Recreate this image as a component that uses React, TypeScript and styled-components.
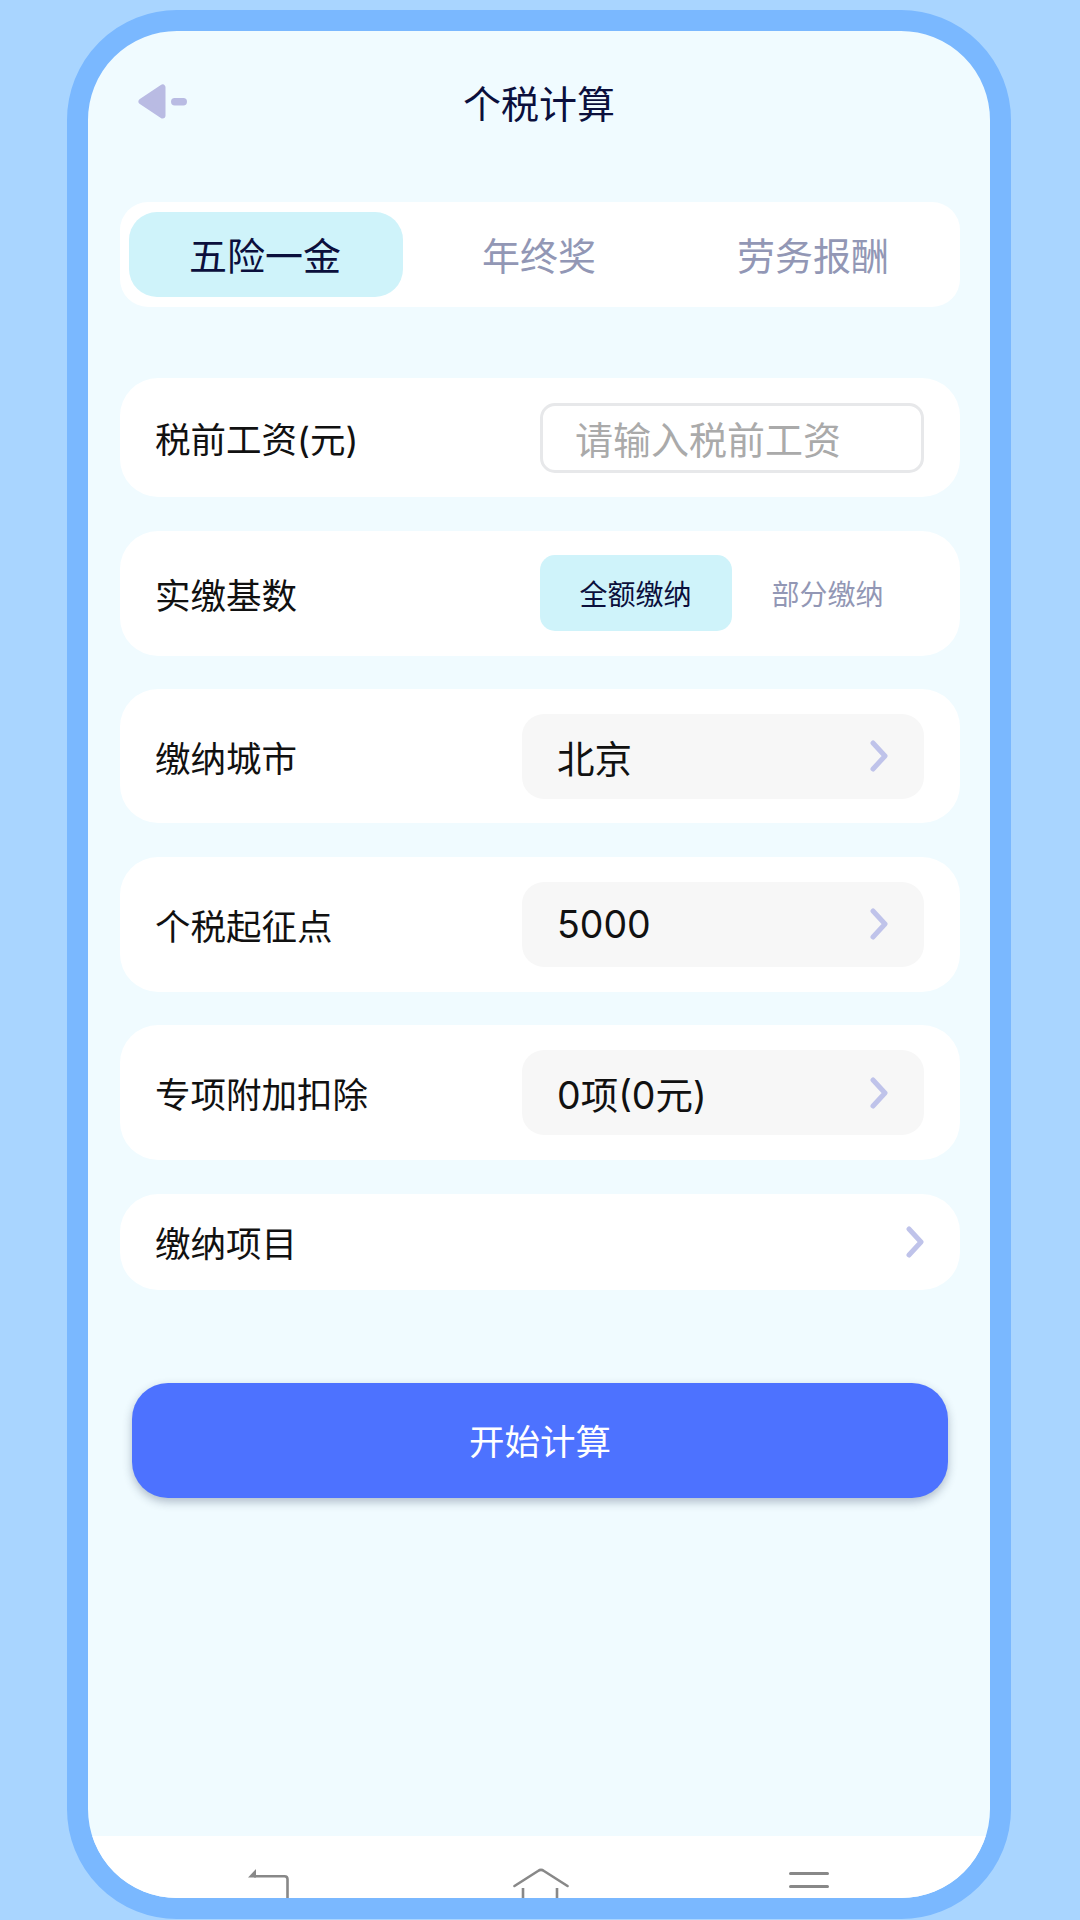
import React from "react";
import styled, { createGlobalStyle } from "styled-components";

const FONT = `Inter, "Noto Sans CJK SC", sans-serif`;

const Global = createGlobalStyle`
  html, body { margin: 0; padding: 0; }
  body { background: #a9d5ff; font-family: ${FONT}; }
`;

const Page = styled.div`
  width: 1080px;
  height: 1920px;
  box-sizing: border-box;
  padding: 10px 69px 1px 67px;
  background: #a9d5ff;
  overflow: hidden;
`;

const Phone = styled.div`
  height: 100%;
  box-sizing: border-box;
  border: 21px solid #7ab8ff;
  border-radius: 110px;
  background: #f0fbff;
  overflow: hidden;
  display: flex;
  flex-direction: column;
`;

const Header = styled.header`
  height: 146px;
  box-sizing: border-box;
  flex: none;
  display: grid;
  grid-template-columns: 1fr auto 1fr;
  align-items: center;
  padding: 0 50px 6px;
  margin-bottom: 25px;
`;

const Title = styled.h1`
  margin: 0;
  font-size: 38px;
  font-weight: 400;
  color: #0b0f3c;
`;

const Content = styled.main`
  display: flex;
  flex-direction: column;
  padding: 0 30px 0 32px;
`;

const Tabs = styled.div`
  height: 105px;
  box-sizing: border-box;
  padding: 10px 9px;
  background: #fff;
  border-radius: 28px;
  display: grid;
  grid-template-columns: repeat(3, 1fr);
  margin-bottom: 71px;
`;

const Tab = styled.div<{ $active?: boolean }>`
  display: flex;
  align-items: center;
  justify-content: center;
  padding: 0 2px 2px 0;
  border-radius: 28px;
  font-size: 38px;
  color: ${(p) => (p.$active ? "#0b0f3c" : "#9297b5")};
  background: ${(p) => (p.$active ? "#cff3fa" : "transparent")};
`;

const Rows = styled.div`
  display: flex;
  flex-direction: column;
  gap: 33.5px;
`;

const Row = styled.div<{ $h: number }>`
  height: ${(p) => p.$h}px;
  box-sizing: border-box;
  padding: 0 36px 0 35px;
  background: #fff;
  border-radius: 38px;
  display: flex;
  align-items: center;
  justify-content: space-between;
`;

const Label = styled.span`
  font-size: 35.5px;
  color: #111;
`;

const Field = styled.div`
  width: 384px;
  height: 70px;
  box-sizing: border-box;
  border: 3px solid #e7e8ea;
  border-radius: 15px;
  padding-left: 32px;
  display: flex;
  align-items: center;
  font-size: 38px;
  color: #aaa;
`;

const Segments = styled.div`
  width: 384px;
  height: 76px;
  display: grid;
  grid-template-columns: 192px 192px;
`;

const Segment = styled.div<{ $active?: boolean }>`
  display: flex;
  align-items: center;
  justify-content: center;
  padding-right: 1px;
  border-radius: 15px;
  font-size: 28px;
  color: ${(p) => (p.$active ? "#0b0f3c" : "#9297b5")};
  background: ${(p) => (p.$active ? "#cff3fa" : "transparent")};
`;

const Select = styled.div`
  width: 402px;
  height: 85px;
  box-sizing: border-box;
  padding: 0 36px 0 35px;
  background: #f7f7f7;
  border-radius: 22px;
  display: flex;
  align-items: center;
  justify-content: space-between;
  font-size: 37.5px;
  color: #111;
`;

const StartButton = styled.button`
  height: 115px;
  margin: 93px 12px 0 12px;
  padding: 0 0 2px;
  border: 0;
  border-radius: 36px;
  background: #4d72ff;
  box-shadow: 0 4px 10px rgba(40, 60, 90, 0.32);
  color: #fff;
  font-family: ${FONT};
  font-size: 35.5px;
`;

const NavBar = styled.nav`
  margin-top: auto;
  height: 62px;
  flex: none;
  background: #fff;
  display: grid;
  grid-template-columns: 1fr 1fr 1fr;
`;

const NavCell = styled.div<{ $pad: number }>`
  display: flex;
  align-items: flex-end;
  padding-left: ${(p) => p.$pad}px;
`;

const Chevron = () => (
  <svg width="18" height="32" viewBox="0 0 18 32" fill="none">
    <path d="M3 3L15 16L3 29" stroke="#bfc3ea" strokeWidth="5" strokeLinecap="round" strokeLinejoin="round" />
  </svg>
);

const BackIcon = () => (
  <svg width="49" height="35" viewBox="0 0 49 35" fill="#b9bbe3">
    <path d="M3.5 17.5L24.5 3.5V31.5Z" stroke="#b9bbe3" strokeWidth="6" strokeLinejoin="round" />
    <rect x="33" y="14" width="16" height="7.4" rx="3.7" />
  </svg>
);

const NavBack = () => (
  <svg width="42" height="30" viewBox="0 0 42 30" fill="none">
    <path d="M6 8.3H36.5C38.5 8.3 39.5 9.3 39.5 11.3V30" stroke="#888" strokeWidth="2.6" />
    <path d="M0 9.6L8 1V9.6Z" fill="#888" />
  </svg>
);

const NavHome = () => (
  <svg width="56" height="30" viewBox="0 0 56 30" fill="none" stroke="#888" strokeWidth="2.6" strokeLinecap="round">
    <path d="M1.5 18L25 3C27 1.6 29 1.6 31 3L54.5 18" />
    <path d="M10 20V30M44 20V30" strokeLinecap="butt" />
  </svg>
);

const NavMenu = () => (
  <svg width="40" height="30" viewBox="0 0 40 30" fill="none" stroke="#888" strokeWidth="3" strokeLinecap="round">
    <path d="M1.5 5.5H38.5M1.5 18.5H38.5" />
  </svg>
);

const SelectRow = ({ label, value, height }: { label: string; value: string; height: number }) => (
  <Row $h={height}>
    <Label>{label}</Label>
    <Select>
      <span>{value}</span>
      <Chevron />
    </Select>
  </Row>
);

export default function App() {
  return (
    <>
      <Global />
      <Page>
        <Phone>
          <Header>
            <BackIcon />
            <Title>个税计算</Title>
          </Header>
          <Content>
            <Tabs>
              <Tab $active>五险一金</Tab>
              <Tab>年终奖</Tab>
              <Tab>劳务报酬</Tab>
            </Tabs>
            <Rows>
              <Row $h={119}>
                <Label>税前工资(元)</Label>
                <Field>请输入税前工资</Field>
              </Row>
              <Row $h={125}>
                <Label>实缴基数</Label>
                <Segments>
                  <Segment $active>全额缴纳</Segment>
                  <Segment>部分缴纳</Segment>
                </Segments>
              </Row>
              <SelectRow label="缴纳城市" value="北京" height={134} />
              <SelectRow label="个税起征点" value="5000" height={135} />
              <SelectRow label="专项附加扣除" value="0项(0元)" height={135} />
              <Row $h={96}>
                <Label>缴纳项目</Label>
                <Chevron />
              </Row>
            </Rows>
            <StartButton>开始计算</StartButton>
          </Content>
          <NavBar>
            <NavCell $pad={160}><NavBack /></NavCell>
            <NavCell $pad={124}><NavHome /></NavCell>
            <NavCell $pad={100}><NavMenu /></NavCell>
          </NavBar>
        </Phone>
      </Page>
    </>
  );
}
